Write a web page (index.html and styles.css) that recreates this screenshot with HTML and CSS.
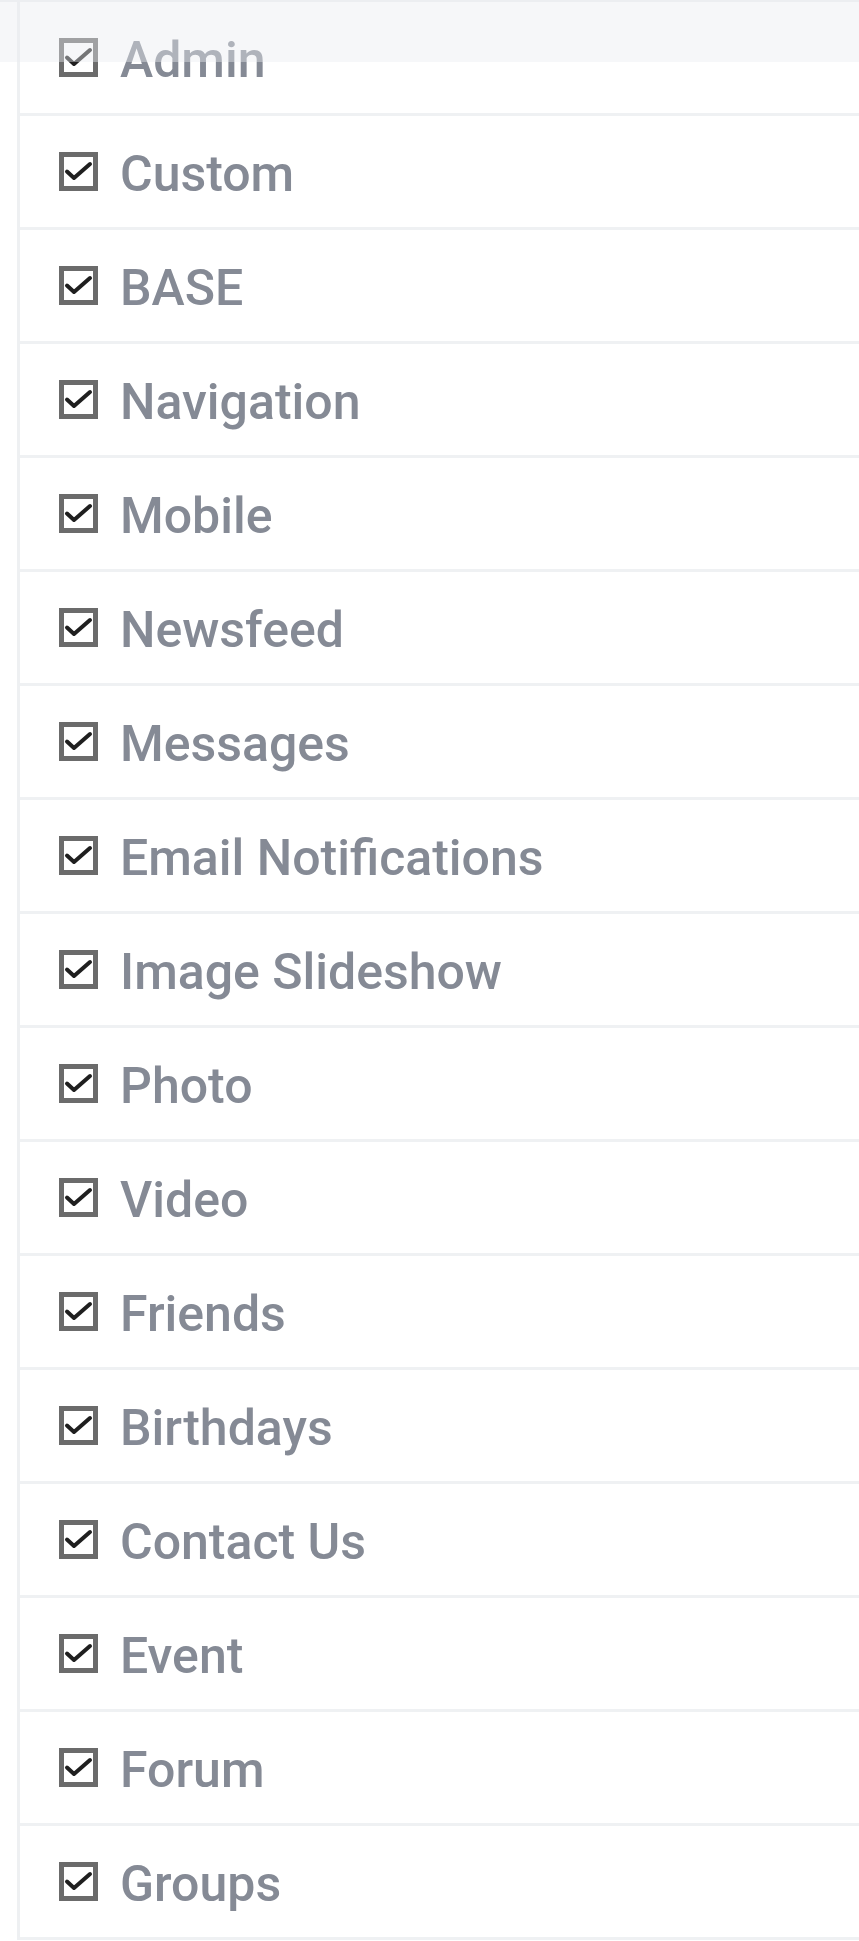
FILE: index.html
```html
<!DOCTYPE html>
<html lang="en">
<head>
<meta charset="utf-8">
<title>Categories</title>
<link rel="stylesheet" href="styles.css">
</head>
<body>
<div class="topbar"></div>
<ul class="list">
  <li class="row"><span class="box"><svg viewBox="0 0 39 39" width="39" height="39"><rect x="2.5" y="2.5" width="34" height="34" fill="#fff" stroke="#6b6b6b" stroke-width="5"/><path d="M8 19.5 L15 26 L31 12" fill="none" stroke="#1f1f1f" stroke-width="4" stroke-linecap="round" stroke-linejoin="round"/></svg></span><span class="label">Admin</span></li>
  <li class="row"><span class="box"><svg viewBox="0 0 39 39" width="39" height="39"><rect x="2.5" y="2.5" width="34" height="34" fill="#fff" stroke="#6b6b6b" stroke-width="5"/><path d="M8 19.5 L15 26 L31 12" fill="none" stroke="#1f1f1f" stroke-width="4" stroke-linecap="round" stroke-linejoin="round"/></svg></span><span class="label">Custom</span></li>
  <li class="row"><span class="box"><svg viewBox="0 0 39 39" width="39" height="39"><rect x="2.5" y="2.5" width="34" height="34" fill="#fff" stroke="#6b6b6b" stroke-width="5"/><path d="M8 19.5 L15 26 L31 12" fill="none" stroke="#1f1f1f" stroke-width="4" stroke-linecap="round" stroke-linejoin="round"/></svg></span><span class="label">BASE</span></li>
  <li class="row"><span class="box"><svg viewBox="0 0 39 39" width="39" height="39"><rect x="2.5" y="2.5" width="34" height="34" fill="#fff" stroke="#6b6b6b" stroke-width="5"/><path d="M8 19.5 L15 26 L31 12" fill="none" stroke="#1f1f1f" stroke-width="4" stroke-linecap="round" stroke-linejoin="round"/></svg></span><span class="label">Navigation</span></li>
  <li class="row"><span class="box"><svg viewBox="0 0 39 39" width="39" height="39"><rect x="2.5" y="2.5" width="34" height="34" fill="#fff" stroke="#6b6b6b" stroke-width="5"/><path d="M8 19.5 L15 26 L31 12" fill="none" stroke="#1f1f1f" stroke-width="4" stroke-linecap="round" stroke-linejoin="round"/></svg></span><span class="label">Mobile</span></li>
  <li class="row"><span class="box"><svg viewBox="0 0 39 39" width="39" height="39"><rect x="2.5" y="2.5" width="34" height="34" fill="#fff" stroke="#6b6b6b" stroke-width="5"/><path d="M8 19.5 L15 26 L31 12" fill="none" stroke="#1f1f1f" stroke-width="4" stroke-linecap="round" stroke-linejoin="round"/></svg></span><span class="label">Newsfeed</span></li>
  <li class="row"><span class="box"><svg viewBox="0 0 39 39" width="39" height="39"><rect x="2.5" y="2.5" width="34" height="34" fill="#fff" stroke="#6b6b6b" stroke-width="5"/><path d="M8 19.5 L15 26 L31 12" fill="none" stroke="#1f1f1f" stroke-width="4" stroke-linecap="round" stroke-linejoin="round"/></svg></span><span class="label">Messages</span></li>
  <li class="row"><span class="box"><svg viewBox="0 0 39 39" width="39" height="39"><rect x="2.5" y="2.5" width="34" height="34" fill="#fff" stroke="#6b6b6b" stroke-width="5"/><path d="M8 19.5 L15 26 L31 12" fill="none" stroke="#1f1f1f" stroke-width="4" stroke-linecap="round" stroke-linejoin="round"/></svg></span><span class="label">Email Notifications</span></li>
  <li class="row"><span class="box"><svg viewBox="0 0 39 39" width="39" height="39"><rect x="2.5" y="2.5" width="34" height="34" fill="#fff" stroke="#6b6b6b" stroke-width="5"/><path d="M8 19.5 L15 26 L31 12" fill="none" stroke="#1f1f1f" stroke-width="4" stroke-linecap="round" stroke-linejoin="round"/></svg></span><span class="label">Image Slideshow</span></li>
  <li class="row"><span class="box"><svg viewBox="0 0 39 39" width="39" height="39"><rect x="2.5" y="2.5" width="34" height="34" fill="#fff" stroke="#6b6b6b" stroke-width="5"/><path d="M8 19.5 L15 26 L31 12" fill="none" stroke="#1f1f1f" stroke-width="4" stroke-linecap="round" stroke-linejoin="round"/></svg></span><span class="label">Photo</span></li>
  <li class="row"><span class="box"><svg viewBox="0 0 39 39" width="39" height="39"><rect x="2.5" y="2.5" width="34" height="34" fill="#fff" stroke="#6b6b6b" stroke-width="5"/><path d="M8 19.5 L15 26 L31 12" fill="none" stroke="#1f1f1f" stroke-width="4" stroke-linecap="round" stroke-linejoin="round"/></svg></span><span class="label">Video</span></li>
  <li class="row"><span class="box"><svg viewBox="0 0 39 39" width="39" height="39"><rect x="2.5" y="2.5" width="34" height="34" fill="#fff" stroke="#6b6b6b" stroke-width="5"/><path d="M8 19.5 L15 26 L31 12" fill="none" stroke="#1f1f1f" stroke-width="4" stroke-linecap="round" stroke-linejoin="round"/></svg></span><span class="label">Friends</span></li>
  <li class="row"><span class="box"><svg viewBox="0 0 39 39" width="39" height="39"><rect x="2.5" y="2.5" width="34" height="34" fill="#fff" stroke="#6b6b6b" stroke-width="5"/><path d="M8 19.5 L15 26 L31 12" fill="none" stroke="#1f1f1f" stroke-width="4" stroke-linecap="round" stroke-linejoin="round"/></svg></span><span class="label">Birthdays</span></li>
  <li class="row"><span class="box"><svg viewBox="0 0 39 39" width="39" height="39"><rect x="2.5" y="2.5" width="34" height="34" fill="#fff" stroke="#6b6b6b" stroke-width="5"/><path d="M8 19.5 L15 26 L31 12" fill="none" stroke="#1f1f1f" stroke-width="4" stroke-linecap="round" stroke-linejoin="round"/></svg></span><span class="label">Contact Us</span></li>
  <li class="row"><span class="box"><svg viewBox="0 0 39 39" width="39" height="39"><rect x="2.5" y="2.5" width="34" height="34" fill="#fff" stroke="#6b6b6b" stroke-width="5"/><path d="M8 19.5 L15 26 L31 12" fill="none" stroke="#1f1f1f" stroke-width="4" stroke-linecap="round" stroke-linejoin="round"/></svg></span><span class="label">Event</span></li>
  <li class="row"><span class="box"><svg viewBox="0 0 39 39" width="39" height="39"><rect x="2.5" y="2.5" width="34" height="34" fill="#fff" stroke="#6b6b6b" stroke-width="5"/><path d="M8 19.5 L15 26 L31 12" fill="none" stroke="#1f1f1f" stroke-width="4" stroke-linecap="round" stroke-linejoin="round"/></svg></span><span class="label">Forum</span></li>
  <li class="row"><span class="box"><svg viewBox="0 0 39 39" width="39" height="39"><rect x="2.5" y="2.5" width="34" height="34" fill="#fff" stroke="#6b6b6b" stroke-width="5"/><path d="M8 19.5 L15 26 L31 12" fill="none" stroke="#1f1f1f" stroke-width="4" stroke-linecap="round" stroke-linejoin="round"/></svg></span><span class="label">Groups</span></li>
</ul>
</body>
</html>
```
FILE: styles.css
```css
html, body {
  margin: 0;
  padding: 0;
  background: #ffffff;
}
body {
  font-family: Roboto, "Liberation Sans", sans-serif;
  overflow: hidden;
}
.topbar {
  position: fixed;
  top: 0;
  left: 0;
  right: 0;
  height: 60px;
  border-top: 2px solid #eceef1;
  background: rgba(233, 236, 240, 0.42);
  z-index: 5;
}
.list {
  list-style: none;
  margin: 2px 0 0 17px;
  padding: 0;
  border-left: 3px solid #eef0f2;
}
.row {
  height: 111px;
  border-bottom: 3px solid #eff1f3;
  display: flex;
  align-items: center;
  padding-left: 39px;
  gap: 22px;
}
.box {
  display: flex;
  width: 39px;
  height: 39px;
  flex: none;
}
.label {
  font-size: 50px;
  font-weight: 500;
  color: #858a95;
  line-height: 1;
  padding-top: 4px;
}
```
